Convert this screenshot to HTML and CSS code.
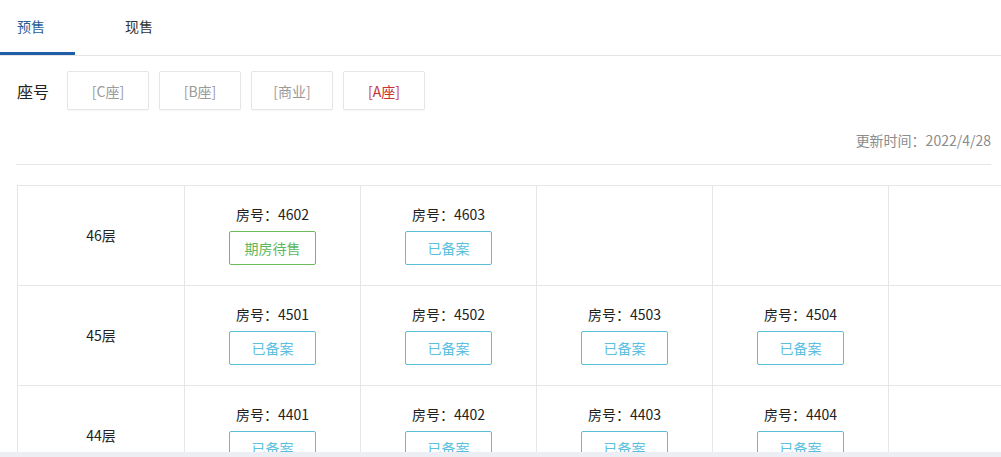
FILE: index.html
```html
<!DOCTYPE html>
<html lang="zh">
<head>
<meta charset="utf-8">
<title>楼盘表</title>
<link rel="stylesheet" href="styles.css">
</head>
<body>
<div class="page">
  <div class="tabs">
    <div class="tab active">预售</div>
    <div class="tab">现售</div>
  </div>
  <div class="content">
    <div class="seats">
      <span class="seat-label">座号</span>
      <button class="seat">[C座]</button>
      <button class="seat">[B座]</button>
      <button class="seat">[商业]</button>
      <button class="seat current">[A座]</button>
    </div>
    <div class="update">更新时间：2022/4/28</div>
    <div class="divider"></div>
    <div class="grid">
      <div class="cell floor">46层</div>
      <div class="cell room"><span class="no">房号：4602</span><span class="status green">期房待售</span></div>
      <div class="cell room"><span class="no">房号：4603</span><span class="status blue">已备案</span></div>
      <div class="cell"></div>
      <div class="cell"></div>
      <div class="cell"></div>

      <div class="cell floor">45层</div>
      <div class="cell room"><span class="no">房号：4501</span><span class="status blue">已备案</span></div>
      <div class="cell room"><span class="no">房号：4502</span><span class="status blue">已备案</span></div>
      <div class="cell room"><span class="no">房号：4503</span><span class="status blue">已备案</span></div>
      <div class="cell room"><span class="no">房号：4504</span><span class="status blue">已备案</span></div>
      <div class="cell"></div>

      <div class="cell floor">44层</div>
      <div class="cell room"><span class="no">房号：4401</span><span class="status blue">已备案</span></div>
      <div class="cell room"><span class="no">房号：4402</span><span class="status blue">已备案</span></div>
      <div class="cell room"><span class="no">房号：4403</span><span class="status blue">已备案</span></div>
      <div class="cell room"><span class="no">房号：4404</span><span class="status blue">已备案</span></div>
      <div class="cell"></div>
    </div>
  </div>
  <div class="hscroll"></div>
</div>
</body>
</html>
```

FILE: styles.css
```css
* { box-sizing: border-box; }
html, body { margin: 0; padding: 0; background: #fff; }
body {
  font-family: "Noto Sans CJK SC", "Noto Sans", sans-serif;
  color: #222;
  font-size: 14px;
}
.page {
  position: relative;
  width: 1001px;
  height: 457px;
  overflow: hidden;
}
.tabs {
  display: flex;
  height: 56px;
  border-bottom: 1px solid #e4e4e4;
}
.tab {
  height: 55px;
  line-height: 52px;
  font-size: 14px;
  color: #333;
  padding-left: 17px;
  width: 75px;
  border-bottom: 3px solid transparent;
}
.tab.active {
  color: #2a5d99;
  border-bottom-color: #1f5ea6;
}
.tab + .tab { margin-left: 33px; }
.content {
  padding: 0 10px 0 17px;
}
.seats {
  display: flex;
  align-items: center;
  margin-top: 15px;
  height: 39px;
}
.seat-label {
  font-size: 16px;
  color: #222;
  width: 50px;
}
.seat {
  width: 82px;
  height: 39px;
  margin-right: 10px;
  background: #fff;
  border: 1px solid #e6e6e6;
  border-radius: 2px;
  box-shadow: 0 1px 2px rgba(0,0,0,0.04);
  font-family: inherit;
  font-size: 14px;
  color: #9a9a9a;
  padding: 0;
}
.seat.current { color: #c8332f; }
.update {
  margin-top: 20px;
  text-align: right;
  font-size: 14px;
  line-height: 20px;
  color: #8c8c8c;
}
.divider {
  margin-top: 14px;
  margin-left: -1px;
  height: 1px;
  background: #e6e6e6;
}
.grid {
  margin-top: 20px;
  display: grid;
  grid-template-columns: 167px repeat(5, 176px);
  grid-auto-rows: 100px;
  border-top: 1px solid #e6e6e6;
  border-left: 1px solid #e6e6e6;
  width: max-content;
}
.cell {
  border-right: 1px solid #e6e6e6;
  border-bottom: 1px solid #e6e6e6;
}
.floor {
  display: flex;
  align-items: center;
  justify-content: center;
  font-size: 14px;
  color: #222;
  padding-bottom: 2px;
}
.room {
  display: flex;
  flex-direction: column;
  align-items: center;
  justify-content: center;
  padding-bottom: 3px;
}
.no {
  line-height: 20px;
  font-size: 14px;
  color: #222;
}
.status {
  margin-top: 7px;
  width: 87px;
  height: 34px;
  line-height: 32px;
  text-align: center;
  font-size: 14px;
  border: 1px solid;
  border-radius: 2px;
}
.green { color: #5cb85c; border-color: #6bbd5b; }
.blue { color: #5bc0de; border-color: #5bbdd6; }
.hscroll {
  position: absolute;
  left: 0;
  right: 0;
  bottom: 0;
  height: 5px;
  background: #eceef3;
}
```
